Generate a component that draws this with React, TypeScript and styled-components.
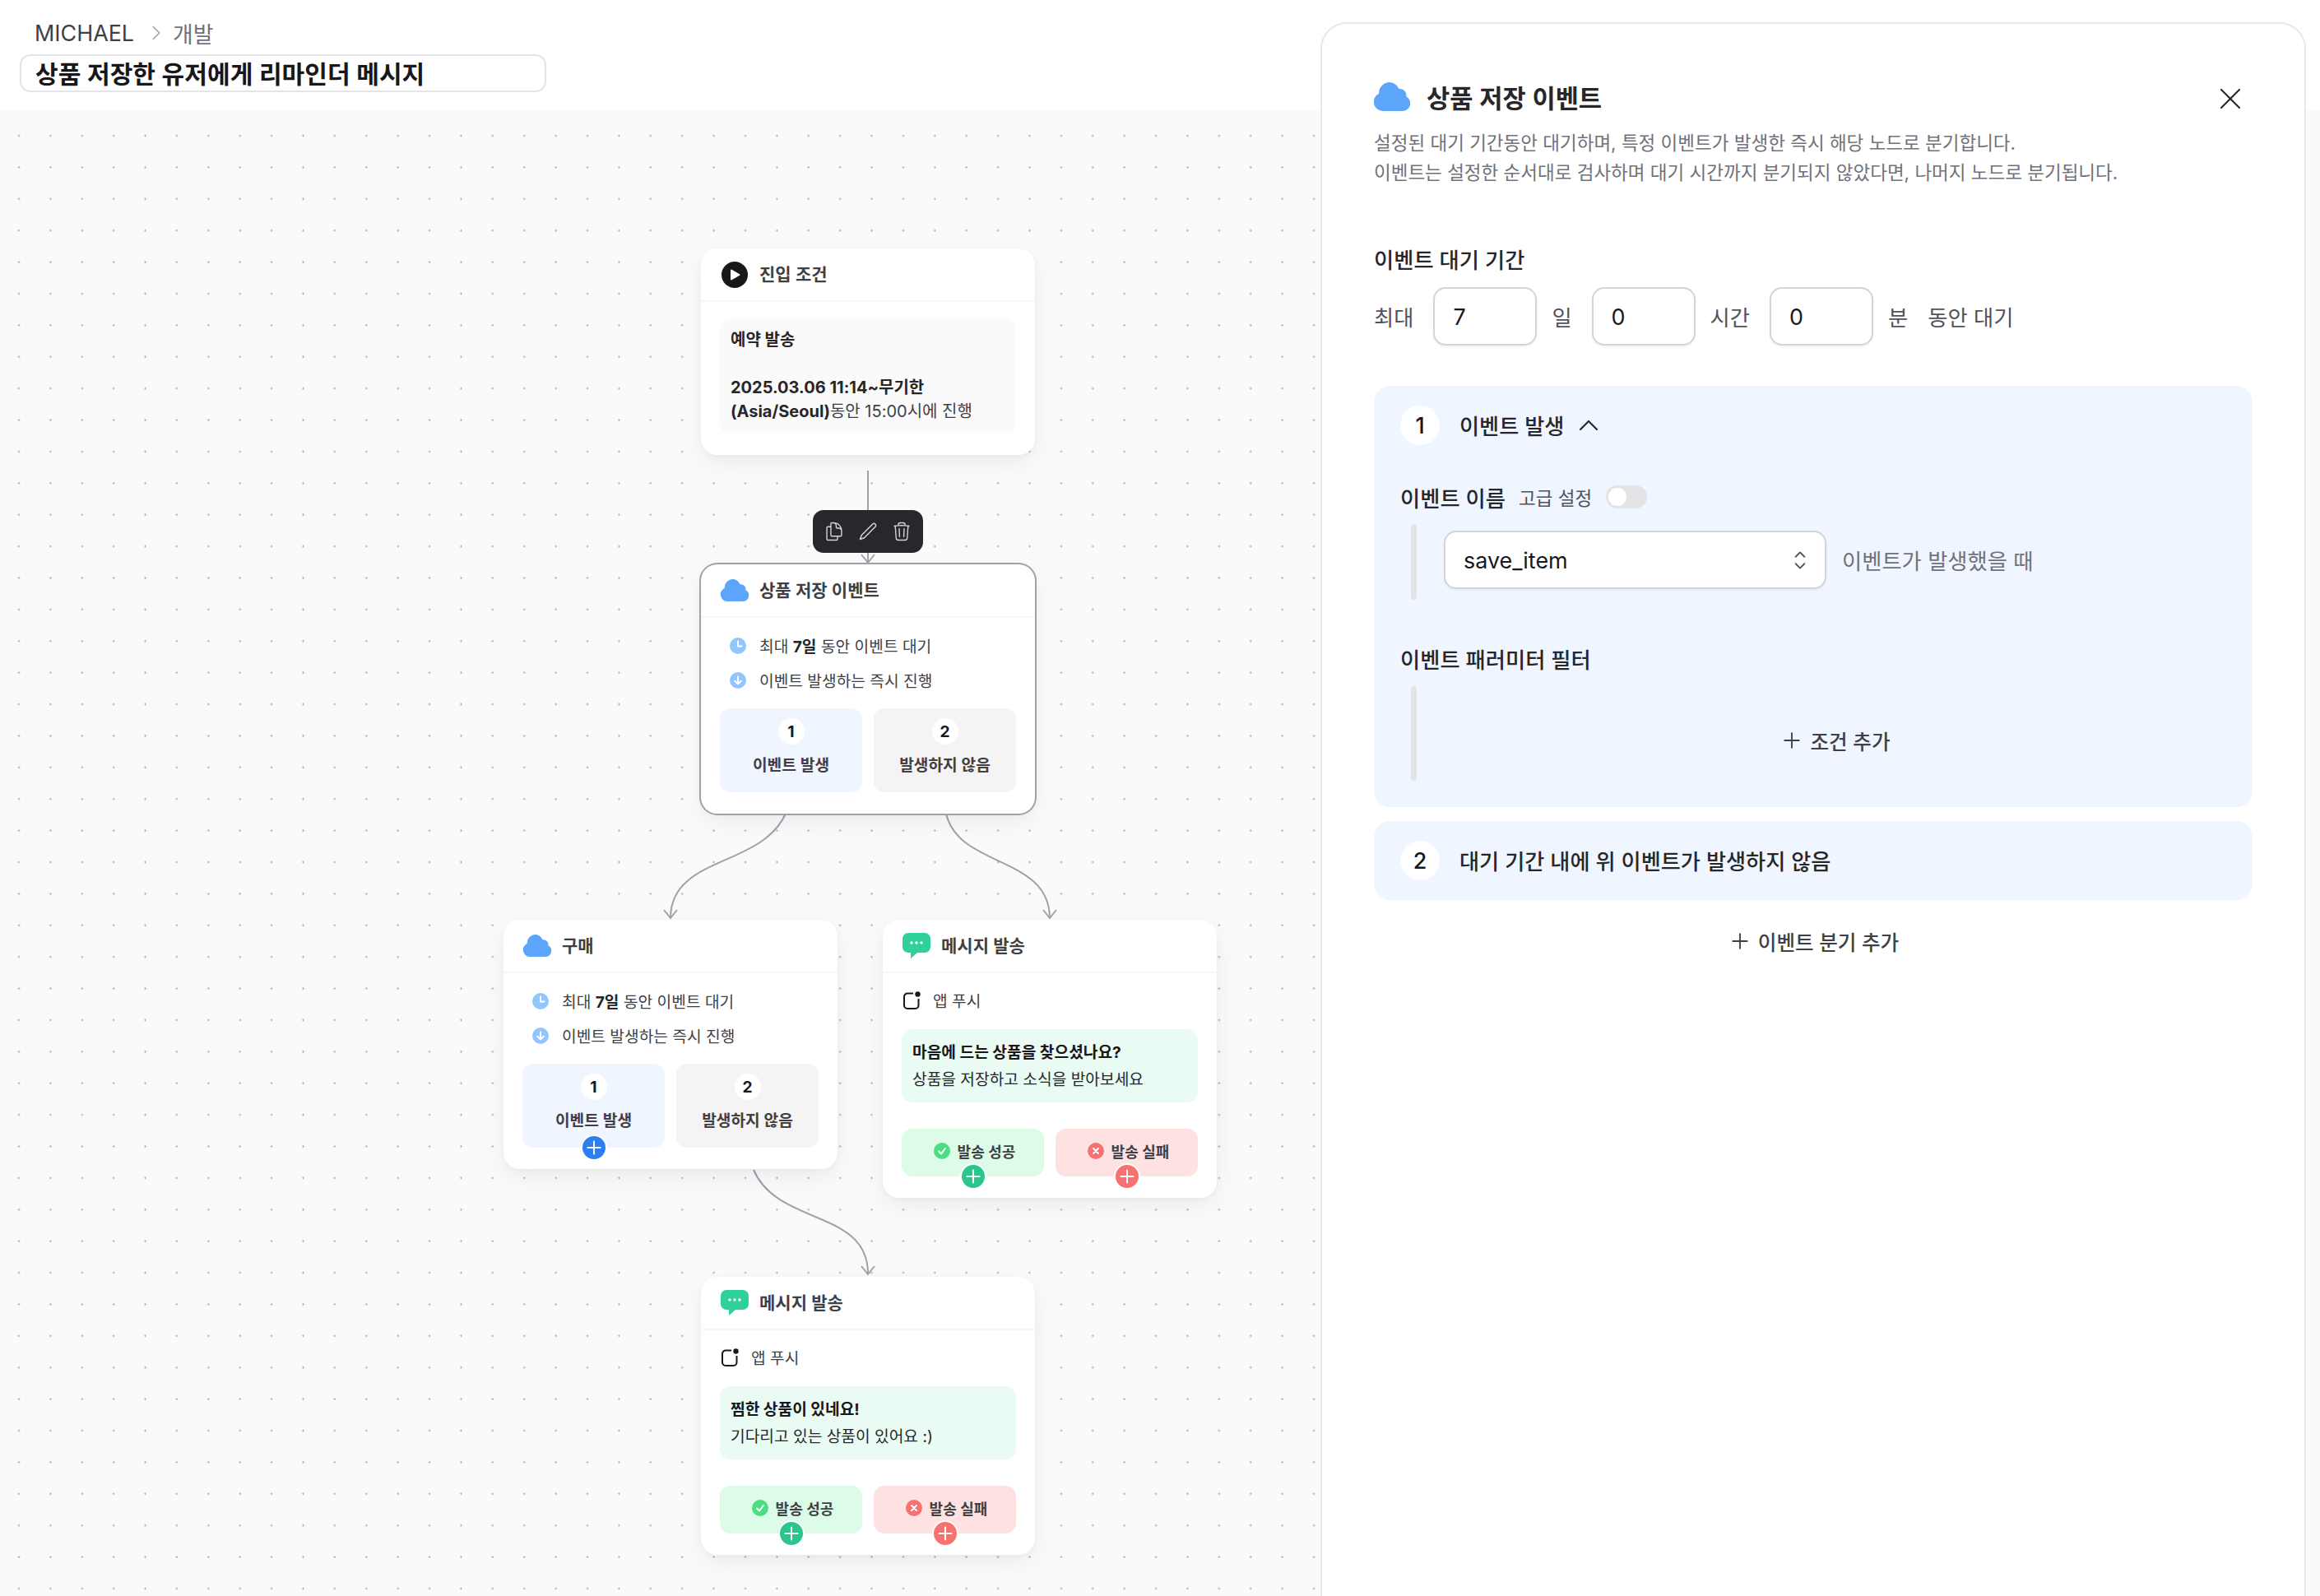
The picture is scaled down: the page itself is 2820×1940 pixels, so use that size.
import React from 'react';
import styled, { createGlobalStyle } from 'styled-components';
import { ChevronRight, ChevronUp, Plus, X } from 'lucide-react';
import { HiOutlineDocumentDuplicate, HiOutlineTrash, HiOutlineChevronUpDown } from 'react-icons/hi2';

const GlobalStyle = createGlobalStyle`
  html, body {
    margin: 0;
    padding: 0;
    width: 2820px;
    height: 1940px;
    overflow: hidden;
    background: #fff;
  }
  * { box-sizing: border-box; }
  body {
    font-family: Inter, "Noto Sans CJK KR", sans-serif;
    color: #18181b;
  }
`;

const CANVAS_TOP = 134;

const CloudIcon = ({ width = 34 }: { width?: number }) => (
  <svg width={width} viewBox="1.6 3.7 20.8 16.6" fill="#5ba6fb">
    <path d="M4.5 9.75a6 6 0 0 1 11.573-2.226 3.75 3.75 0 0 1 4.133 4.303A4.495 4.495 0 0 1 18 20.25H6.75a5.25 5.25 0 0 1-2.23-10.004 6.072 6.072 0 0 1-.02-.496Z" />
  </svg>
);

const MessageIcon = () => (
  <svg width="34" height="31" viewBox="0 0 34 31">
    <path fill="#2fd09a" d="M7 0h20a7 7 0 0 1 7 7v10a7 7 0 0 1-7 7H18l-8 7v-7H7a7 7 0 0 1-7-7V7a7 7 0 0 1 7-7Z" />
    <circle cx="11" cy="12" r="1.7" fill="#fff" />
    <circle cx="17" cy="12" r="1.7" fill="#fff" />
    <circle cx="23" cy="12" r="1.7" fill="#fff" />
  </svg>
);

const PlayIcon = () => (
  <svg width="32" height="32" viewBox="0 0 32 32">
    <circle cx="16" cy="16" r="16" fill="#18181b" />
    <path fill="#fff" stroke="#fff" strokeWidth="2" strokeLinejoin="round" d="M12 10.5v11l9.5-5.5Z" />
  </svg>
);

const ClockIcon = () => (
  <svg width="20" height="20" viewBox="0 0 20 20">
    <circle cx="10" cy="10" r="10" fill="#93c5fd" />
    <path d="M10 4.5v6h4.5" fill="none" stroke="#fff" strokeWidth="2" strokeLinecap="round" strokeLinejoin="round" />
  </svg>
);

const ArrowCircleIcon = () => (
  <svg width="20" height="20" viewBox="0 0 20 20">
    <circle cx="10" cy="10" r="10" fill="#93c5fd" />
    <path d="M10 5.5v9M6.2 10.8l3.8 3.7 3.8-3.7" fill="none" stroke="#fff" strokeWidth="2" strokeLinecap="round" strokeLinejoin="round" />
  </svg>
);

const CheckCircleIcon = () => (
  <svg width="20" height="20" viewBox="0 0 20 20">
    <circle cx="10" cy="10" r="10" fill="#4ade80" />
    <path d="M6 10.5l3 3 5-6.5" fill="none" stroke="#fff" strokeWidth="2" strokeLinecap="round" strokeLinejoin="round" />
  </svg>
);

const FailCircleIcon = () => (
  <svg width="20" height="20" viewBox="0 0 20 20">
    <circle cx="10" cy="10" r="10" fill="#f87171" />
    <path d="M7 7l6 6M13 7l-6 6" fill="none" stroke="#fff" strokeWidth="2" strokeLinecap="round" />
  </svg>
);

const PushIcon = () => (
  <svg width="22" height="22" viewBox="0 0 22 22">
    <path d="M13 2.5H6a4 4 0 0 0-4 4V17a4 4 0 0 0 4 4h9.500a4 4 0 0 0 4-4V9" fill="none" stroke="#18181b" strokeWidth="2" />
    <circle cx="18.500" cy="3.500" r="3.200" fill="#18181b" />
  </svg>
);

const SlimPencilIcon = () => (
  <svg width="24" height="24" viewBox="0 0 24 24" fill="none" stroke="currentColor" strokeWidth="1.5" strokeLinejoin="round">
    <path d="M18 2.800a2.300 2.300 0 0 1 3.200 3.200L7.500 19.700 2.500 21.500l1.800-5Z" />
  </svg>
);

const Page = styled.div`
  position: relative;
  width: 2820px;
  height: 1940px;
  overflow: hidden;
  background: #fff;
`;

const Header = styled.header`
  height: ${CANVAS_TOP}px;
  padding: 22px 0 0 24px;
`;

const Breadcrumb = styled.nav`
  display: flex;
  align-items: center;
  height: 36px;
  padding-left: 18px;
  font-size: 26.9px;
  color: #3f3f46;
  svg {
    margin: 0 5px 0 12px;
    color: #a1a1aa;
  }
`;

const BreadcrumbLeaf = styled.span`
  color: #71717a;
`;

const TitleInput = styled.div`
  display: flex;
  align-items: center;
  width: 640px;
  height: 46px;
  margin-top: 8px;
  padding: 0 0 3px 17px;
  border: 2px solid #e4e4e7;
  border-radius: 13px;
  font-size: 30.1px;
  font-weight: 600;
  color: #18181b;
`;

const Canvas = styled.main`
  position: relative;
  height: ${1940 - CANVAS_TOP}px;
  background-color: #fafafb;
  background-image: radial-gradient(circle at 1.5px 1.5px, #b4b7bf 1px, transparent 1.4px);
  background-size: 38.4px 38.4px;
  background-position: 21.5px 29.5px;
`;

const Edges = styled.svg`
  position: absolute;
  inset: 0;
  width: 100%;
  height: 100%;
  fill: none;
  stroke: #a1a1aa;
  stroke-width: 2;
`;

const FlowNode = styled.section<{ $x: number; $y: number; $selected?: boolean }>`
  position: absolute;
  left: ${(p) => p.$x}px;
  top: ${(p) => p.$y - CANVAS_TOP}px;
  width: 406px;
  background: #fff;
  border-radius: 20px;
  box-shadow: ${(p) => (p.$selected ? '0 0 0 2px #a1a1aa, ' : '')}0 10px 28px rgba(24, 24, 27, 0.06), 0 2px 6px rgba(24, 24, 27, 0.03);
`;

const NodeHeader = styled.header`
  display: flex;
  align-items: center;
  height: 65px;
  padding-left: 24px;
  gap: 13px;
  border-bottom: 2px solid #f6f6f7;
`;

const NodeIconSlot = styled.span`
  display: flex;
  align-items: center;
  justify-content: center;
  width: 34px;
`;

const NodeTitle = styled.h3`
  margin: 0 0 3px;
  font-size: 21px;
  font-weight: 600;
  color: #3f3f46;
`;

const NodeBody = styled.div<{ $top?: number }>`
  padding: ${(p) => p.$top ?? 22}px 23px 26px;
`;

const ScheduleBox = styled.div`
  padding: 12px 13px;
  border-radius: 13px;
  background: #fafafa;
  font-size: 20px;
  line-height: 29px;
  color: #3f3f46;
  strong { color: #27272a; font-weight: 700; }
`;

const InfoRows = styled.div`
  display: flex;
  flex-direction: column;
  gap: 18px;
  padding-left: 12px;
`;

const InfoRow = styled.div`
  display: flex;
  align-items: center;
  gap: 16px;
  height: 24px;
  font-size: 19.2px;
  color: #3f3f46;
  strong { font-weight: 700; color: #27272a; }
`;

const BranchGrid = styled.div<{ $top: number }>`
  display: grid;
  grid-template-columns: 1fr 1fr;
  gap: 14px;
  margin-top: ${(p) => p.$top}px;
`;

const Branch = styled.div<{ $bg: string }>`
  position: relative;
  display: flex;
  flex-direction: column;
  align-items: center;
  height: 102px;
  padding-top: 12px;
  border-radius: 13px;
  background: ${(p) => p.$bg};
`;

const BranchBadge = styled.span`
  display: flex;
  align-items: center;
  justify-content: center;
  width: 32px;
  height: 32px;
  border-radius: 50%;
  background: #fff;
  font-size: 19.2px;
  font-weight: 700;
  color: #18181b;
`;

const BranchLabel = styled.span`
  margin-top: 11px;
  font-size: 19.2px;
  line-height: 28px;
  font-weight: 600;
  color: #3f3f46;
`;

const AddDot = styled.span<{ $bg: string }>`
  position: absolute;
  left: 50%;
  bottom: 0;
  transform: translate(-50%, 50%);
  display: flex;
  align-items: center;
  justify-content: center;
  width: 32px;
  height: 32px;
  border: 2px solid #fff;
  border-radius: 50%;
  background: ${(p) => p.$bg};
  color: #fff;
`;

const ChannelRow = styled.div`
  display: flex;
  align-items: center;
  gap: 15px;
  height: 24px;
  padding-left: 1px;
  font-size: 19.2px;
  color: #3f3f46;
`;

const MessagePreview = styled.div`
  display: flex;
  flex-direction: column;
  justify-content: center;
  gap: 4px;
  height: 89px;
  margin-top: 23px;
  padding-left: 13px;
  border-radius: 13px;
  background: #e9fbf3;
  font-size: 19.2px;
  line-height: 29px;
  color: #27272a;
  strong { font-weight: 700; color: #18181b; }
`;

const ResultGrid = styled.div`
  display: grid;
  grid-template-columns: 1fr 1fr;
  gap: 14px;
  margin-top: 32px;
`;

const ResultButton = styled.div<{ $bg: string }>`
  position: relative;
  display: flex;
  align-items: center;
  justify-content: center;
  gap: 9px;
  height: 58px;
  padding: 0 0 4px 4px;
  border-radius: 13px;
  background: ${(p) => p.$bg};
  font-size: 18px;
  font-weight: 600;
  color: #3f3f46;
`;

const NodeToolbar = styled.div`
  position: absolute;
  left: 988px;
  top: ${620 - CANVAS_TOP}px;
  display: flex;
  align-items: center;
  justify-content: center;
  gap: 16px;
  width: 134px;
  height: 52px;
  border-radius: 13px;
  background: #27282b;
  color: #d4d4d8;
`;

const Drawer = styled.aside`
  position: absolute;
  left: 1605px;
  top: 27px;
  width: 1198px;
  height: 1960px;
  padding: 69px 63px 0;
  border: 2px solid #e9e9ec;
  border-radius: 32px;
  background: #fff;
`;

const DrawerTitleRow = styled.div`
  display: flex;
  align-items: center;
  height: 40px;
`;

const DrawerTitle = styled.h2`
  flex: 1;
  margin: 0 0 2px 20px;
  font-size: 30.7px;
  font-weight: 600;
  color: #27272a;
`;

const CloseButton = styled.span`
  display: flex;
  margin: 4px 5px 0 0;
  color: #27272a;
`;

const DrawerDescription = styled.p`
  margin: 18px 0 0;
  font-size: 22.5px;
  line-height: 36px;
  color: #71717a;
`;

const SectionLabel = styled.h4<{ $top: number }>`
  margin: ${(p) => p.$top}px 0 0;
  font-size: 26.3px;
  font-weight: 500;
  line-height: 40px;
  color: #27272a;
`;

const DurationRow = styled.div`
  display: flex;
  align-items: center;
  gap: 21px;
  margin-top: 12px;
  font-size: 26.3px;
  color: #52525b;
`;

const DurationPrefix = styled.span`
  margin-right: 3px;
`;

const DurationUnit = styled.span`
  margin: 0 3px 0 -3px;
`;

const NumberField = styled.div`
  display: flex;
  align-items: center;
  width: 126px;
  height: 71px;
  padding-left: 22px;
  border: 2px solid #d4d4d8;
  border-radius: 15px;
  background: #fff;
  box-shadow: 0 2px 3px rgba(0, 0, 0, 0.05);
  font-size: 26.9px;
  color: #18181b;
`;

const BranchCard = styled.section<{ $top: number; $bottom?: number }>`
  margin-top: ${(p) => p.$top}px;
  padding: 24px 32px ${(p) => p.$bottom ?? 24}px;
  border-radius: 20px;
  background: #eff6ff;
`;

const CardHead = styled.div`
  display: flex;
  align-items: center;
  height: 48px;
  font-size: 26.2px;
  font-weight: 500;
  color: #27272a;
  svg { margin-left: 10px; }
`;

const CardBadge = styled.span`
  display: flex;
  align-items: center;
  justify-content: center;
  width: 48px;
  height: 48px;
  margin-right: 24px;
  border-radius: 50%;
  background: #fff;
  font-size: 26.9px;
  color: #18181b;
`;

const FieldHead = styled.div<{ $top: number }>`
  display: flex;
  align-items: center;
  height: 40px;
  margin-top: ${(p) => p.$top}px;
  font-size: 26.3px;
  font-weight: 500;
  color: #27272a;
`;

const FieldHint = styled.span`
  margin-left: 16px;
  font-size: 22.5px;
  font-weight: 400;
  color: #52525b;
`;

const Toggle = styled.span`
  position: relative;
  width: 50px;
  height: 28px;
  margin-left: 17px;
  border-radius: 14px;
  background: #e4e4e7;
  &::after {
    content: '';
    position: absolute;
    left: 3px;
    top: 3px;
    width: 22px;
    height: 22px;
    border-radius: 50%;
    background: #fff;
  }
`;

const FieldBody = styled.div<{ $height: number; $top: number }>`
  display: flex;
  gap: 33px;
  height: ${(p) => p.$height}px;
  margin-top: ${(p) => p.$top}px;
  padding-left: 13px;
`;

const IndentBar = styled.span`
  flex: none;
  width: 7px;
  border-radius: 4px;
  background: #e4e4e7;
`;

const SelectRow = styled.div`
  display: flex;
  align-items: center;
  gap: 19px;
  height: 71px;
  margin-top: 8px;
  font-size: 26.3px;
  color: #71717a;
`;

const EventSelect = styled.div`
  display: flex;
  align-items: center;
  justify-content: space-between;
  width: 465px;
  height: 71px;
  padding: 0 13px 0 22px;
  border: 2px solid #d4d4d8;
  border-radius: 15px;
  background: #fff;
  box-shadow: 0 2px 3px rgba(0, 0, 0, 0.05);
  font-size: 26.9px;
  color: #18181b;
  svg { color: #52525b; }
`;

const TextAction = styled.div<{ $top?: number }>`
  display: flex;
  align-items: center;
  justify-content: center;
  gap: 7px;
  height: 40px;
  margin-top: ${(p) => p.$top ?? 0}px;
  font-size: 24.6px;
  font-weight: 500;
  color: #3f3f46;
`;

const FilterSlot = styled.div`
  flex: 1;
  padding-top: 46px;
`;

interface EventNodeProps {
  x: number;
  y: number;
  title: string;
  selected?: boolean;
  addDot?: boolean;
}

const EventNode = ({ x, y, title, selected, addDot }: EventNodeProps) => (
  <FlowNode $x={x} $y={y} $selected={selected}>
    <NodeHeader>
      <NodeIconSlot><CloudIcon /></NodeIconSlot>
      <NodeTitle>{title}</NodeTitle>
    </NodeHeader>
    <NodeBody>
      <InfoRows>
        <InfoRow><ClockIcon /><span>최대 <strong>7일</strong> 동안 이벤트 대기</span></InfoRow>
        <InfoRow><ArrowCircleIcon /><span>이벤트 발생하는 즉시 진행</span></InfoRow>
      </InfoRows>
      <BranchGrid $top={22}>
        <Branch $bg="#eff6ff">
          <BranchBadge>1</BranchBadge>
          <BranchLabel>이벤트 발생</BranchLabel>
          {addDot && <AddDot $bg="#2b7ff0"><Plus size={26} strokeWidth={1.8} /></AddDot>}
        </Branch>
        <Branch $bg="#f4f4f5">
          <BranchBadge>2</BranchBadge>
          <BranchLabel>발생하지 않음</BranchLabel>
        </Branch>
      </BranchGrid>
    </NodeBody>
  </FlowNode>
);

interface MessageNodeProps {
  x: number;
  y: number;
  headline: string;
  body: string;
}

const MessageNode = ({ x, y, headline, body }: MessageNodeProps) => (
  <FlowNode $x={x} $y={y}>
    <NodeHeader>
      <NodeIconSlot><MessageIcon /></NodeIconSlot>
      <NodeTitle>메시지 발송</NodeTitle>
    </NodeHeader>
    <NodeBody $top={21}>
      <ChannelRow><PushIcon /><span>앱 푸시</span></ChannelRow>
      <MessagePreview>
        <strong>{headline}</strong>
        <span>{body}</span>
      </MessagePreview>
      <ResultGrid>
        <ResultButton $bg="#dcfce7">
          <CheckCircleIcon />발송 성공
          <AddDot $bg="#2cc58d"><Plus size={26} strokeWidth={1.8} /></AddDot>
        </ResultButton>
        <ResultButton $bg="#fee2e2">
          <FailCircleIcon />발송 실패
          <AddDot $bg="#f87171"><Plus size={26} strokeWidth={1.8} /></AddDot>
        </ResultButton>
      </ResultGrid>
    </NodeBody>
  </FlowNode>
);

const Arrow = ({ x, y }: { x: number; y: number }) => (
  <path d={`M${x - 8} ${y - 10}L${x} ${y}L${x + 8} ${y - 10}`} />
);

export default function App() {
  return (
    <Page>
      <GlobalStyle />
      <Header>
        <Breadcrumb>
          MICHAEL
          <ChevronRight size={30} strokeWidth={1.3} />
          <BreadcrumbLeaf>개발</BreadcrumbLeaf>
        </Breadcrumb>
        <TitleInput>상품 저장한 유저에게 리마인더 메시지</TitleInput>
      </Header>

      <Canvas>
        <Edges viewBox={`0 ${CANVAS_TOP} 2820 ${1940 - CANVAS_TOP}`}>
          <path d="M1055 572V684" />
          <Arrow x={1055} y={684} />
          <path d="M955 989C925 1055 815 1040 815 1116" />
          <Arrow x={815} y={1116} />
          <path d="M1150 989C1165 1055 1276 1040 1276 1116" />
          <Arrow x={1276} y={1116} />
          <path d="M916 1422C945 1490 1055 1470 1055 1548" />
          <Arrow x={1055} y={1549} />
        </Edges>

        <FlowNode $x={852} $y={302}>
          <NodeHeader>
            <NodeIconSlot><PlayIcon /></NodeIconSlot>
            <NodeTitle>진입 조건</NodeTitle>
          </NodeHeader>
          <NodeBody $top={20}>
            <ScheduleBox>
              <strong>예약 발송</strong>
              <br />
              <br />
              <strong>2025.03.06 11:14~무기한</strong>
              <br />
              <strong>(Asia/Seoul)</strong>동안 15:00시에 진행
            </ScheduleBox>
          </NodeBody>
        </FlowNode>

        <EventNode x={852} y={686} title="상품 저장 이벤트" selected />
        <NodeToolbar>
          <HiOutlineDocumentDuplicate size={26} strokeWidth={1.3} />
          <SlimPencilIcon />
          <HiOutlineTrash size={26} strokeWidth={1.3} />
        </NodeToolbar>

        <EventNode x={612} y={1118} title="구매" addDot />
        <MessageNode x={1073} y={1118} headline="마음에 드는 상품을 찾으셨나요?" body="상품을 저장하고 소식을 받아보세요" />
        <MessageNode x={852} y={1552} headline="찜한 상품이 있네요!" body="기다리고 있는 상품이 있어요 :)" />
      </Canvas>

      <Drawer>
        <DrawerTitleRow>
          <CloudIcon width={44} />
          <DrawerTitle>상품 저장 이벤트</DrawerTitle>
          <CloseButton><X size={44} strokeWidth={1.2} /></CloseButton>
        </DrawerTitleRow>
        <DrawerDescription>
          설정된 대기 기간동안 대기하며, 특정 이벤트가 발생한 즉시 해당 노드로 분기합니다.
          <br />
          이벤트는 설정한 순서대로 검사하며 대기 시간까지 분기되지 않았다면, 나머지 노드로 분기됩니다.
        </DrawerDescription>

        <SectionLabel $top={69}>이벤트 대기 기간</SectionLabel>
        <DurationRow>
          <DurationPrefix>최대</DurationPrefix>
          <NumberField>7</NumberField>
          <DurationUnit>일</DurationUnit>
          <NumberField>0</NumberField>
          <DurationUnit>시간</DurationUnit>
          <NumberField>0</NumberField>
          <DurationUnit>분</DurationUnit>
          <span>동안 대기</span>
        </DurationRow>

        <BranchCard $top={49} $bottom={32}>
          <CardHead>
            <CardBadge>1</CardBadge>
            이벤트 발생
            <ChevronUp size={40} strokeWidth={1.3} />
          </CardHead>
          <FieldHead $top={43}>
            이벤트 이름
            <FieldHint>고급 설정</FieldHint>
            <Toggle />
          </FieldHead>
          <FieldBody $height={92} $top={13}>
            <IndentBar />
            <SelectRow>
              <EventSelect>
                save_item
                <HiOutlineChevronUpDown size={34} strokeWidth={1.3} />
              </EventSelect>
              이벤트가 발생했을 때
            </SelectRow>
          </FieldBody>
          <FieldHead $top={51}>이벤트 패러미터 필터</FieldHead>
          <FieldBody $height={115} $top={14}>
            <IndentBar />
            <FilterSlot>
              <TextAction><Plus size={30} strokeWidth={1.5} />조건 추가</TextAction>
            </FilterSlot>
          </FieldBody>
        </BranchCard>

        <BranchCard $top={17}>
          <CardHead>
            <CardBadge>2</CardBadge>
            대기 기간 내에 위 이벤트가 발생하지 않음
          </CardHead>
        </BranchCard>

        <TextAction $top={30}><Plus size={30} strokeWidth={1.5} />이벤트 분기 추가</TextAction>
      </Drawer>
    </Page>
  );
}
